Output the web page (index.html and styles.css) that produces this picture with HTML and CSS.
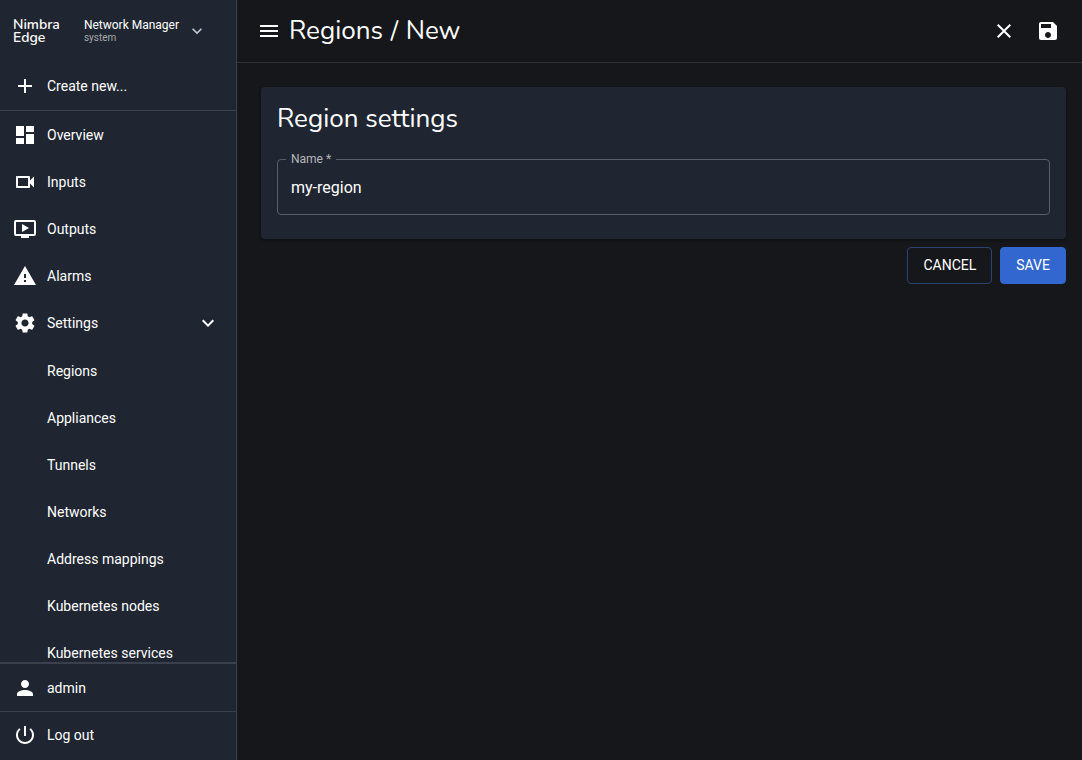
FILE: index.html
```html
<!DOCTYPE html>
<html lang="en">
  <head>
    <meta charset="UTF-8" />
    <meta name="viewport" content="width=device-width, initial-scale=1.0" />
    <title>Regions / New</title>
    <link rel="stylesheet" href="styles.css" />
  </head>
  <body>
    <aside class="sidebar">
      <div class="brand">
        <div class="logo">Nimbra<br />Edge</div>
        <button class="switcher" type="button">
          <span class="switcher-text">
            <span>Network Manager</span>
            <small>system</small>
          </span>
          <svg class="chevron" viewBox="0 0 24 24"><path d="M7.41 8.59 12 13.17l4.59-4.58L18 10l-6 6-6-6z" /></svg>
        </button>
      </div>
      <a class="item create" href="#">
        <svg class="icon" viewBox="0 0 24 24"><path d="M19 13h-6v6h-2v-6H5v-2h6V5h2v6h6z" /></svg>
        <span>Create new...</span>
      </a>
      <nav class="menu">
        <a class="item" href="#">
          <svg class="icon" viewBox="0 0 24 24"><path d="M3 13h8V3H3zm0 8h8v-6H3zm10 0h8V11h-8zm0-18v6h8V3z" /></svg>
          <span>Overview</span>
        </a>
        <a class="item" href="#">
          <svg class="icon" viewBox="0 0 24 24"><path d="M15 8v8H5V8zm1-2H4c-.55 0-1 .45-1 1v10c0 .55.45 1 1 1h12c.55 0 1-.45 1-1v-3.500l4 4v-11l-4 4V7c0-.55-.45-1-1-1z" /></svg>
          <span>Inputs</span>
        </a>
        <a class="item" href="#">
          <svg class="icon" viewBox="0 0 24 24"><path d="M21 3H3c-1.110 0-2 .89-2 2v12c0 1.100.89 2 2 2h5v2h8v-2h5c1.100 0 1.990-.9 1.990-2L23 5c0-1.110-.9-2-2-2zm0 14H3V5h18zM16 11l-7 4V7z" /></svg>
          <span>Outputs</span>
        </a>
        <a class="item" href="#">
          <svg class="icon" viewBox="0 0 24 24"><path d="M1 21h22L12 2zm12-3h-2v-2h2zm0-4h-2v-4h2z" /></svg>
          <span>Alarms</span>
        </a>
        <button class="item" type="button" aria-expanded="true">
          <svg class="icon" viewBox="0 0 24 24"><path d="M19.140 12.940c.04-.3.06-.61.06-.94 0-.32-.02-.64-.07-.94l2.030-1.580c.18-.14.23-.41.12-.61l-1.920-3.320c-.12-.22-.37-.29-.59-.22l-2.390.96c-.5-.38-1.030-.7-1.620-.94l-.36-2.540c-.04-.24-.24-.41-.48-.41h-3.840c-.24 0-.43.17-.47.41l-.36 2.540c-.59.24-1.130.57-1.620.94l-2.390-.96c-.22-.08-.47 0-.59.22L2.740 8.870c-.12.21-.08.47.12.61l2.030 1.580c-.05.3-.09.63-.09.94s.02.64.07.94l-2.030 1.580c-.18.14-.23.41-.12.61l1.920 3.320c.12.22.37.29.59.22l2.390-.96c.5.38 1.030.7 1.620.94l.36 2.540c.05.24.24.41.48.41h3.840c.24 0 .44-.17.47-.41l.36-2.540c.59-.24 1.130-.56 1.620-.94l2.390.96c.22.08.47 0 .59-.22l1.920-3.320c.12-.22.07-.47-.12-.61zM12 15.600c-1.980 0-3.600-1.620-3.600-3.600s1.620-3.600 3.600-3.600 3.600 1.620 3.600 3.600-1.620 3.600-3.600 3.600z" /></svg>
          <span>Settings</span>
          <svg class="icon expand" viewBox="0 0 24 24"><path d="M7.410 8.590 12 13.170l4.590-4.580L18 10l-6 6-6-6z" /></svg>
        </button>
        <div class="submenu">
          <a class="item" href="#">Regions</a>
          <a class="item" href="#">Appliances</a>
          <a class="item" href="#">Tunnels</a>
          <a class="item" href="#">Networks</a>
          <a class="item" href="#">Address mappings</a>
          <a class="item" href="#">Kubernetes nodes</a>
          <a class="item" href="#">Kubernetes services</a>
        </div>
      </nav>
      <div class="account">
        <a class="item" href="#">
          <svg class="icon" viewBox="0 0 24 24"><path d="M12 12c2.210 0 4-1.790 4-4s-1.790-4-4-4-4 1.790-4 4 1.790 4 4 4zm0 2c-2.670 0-8 1.340-8 4v2h16v-2c0-2.660-5.330-4-8-4z" /></svg>
          <span>admin</span>
        </a>
        <a class="item" href="#">
          <svg class="icon" viewBox="0 0 24 24"><path d="M13 3h-2v10h2zm4.830 2.170-1.420 1.420C17.990 7.860 19 9.810 19 12c0 3.870-3.130 7-7 7s-7-3.130-7-7c0-2.190 1.010-4.140 2.580-5.420L6.170 5.170C4.230 6.820 3 9.260 3 12c0 4.970 4.030 9 9 9s9-4.030 9-9c0-2.740-1.230-5.180-3.170-6.830z" /></svg>
          <span>Log out</span>
        </a>
      </div>
    </aside>

    <main class="main">
      <header class="topbar">
        <button class="icon-button" type="button" aria-label="Menu">
          <svg class="icon" viewBox="0 0 24 24"><path d="M3 18h18v-2H3zm0-5h18v-2H3zm0-7v2h18V6z" /></svg>
        </button>
        <h1>Regions <span class="separator">/</span> New</h1>
        <div class="actions">
          <button class="icon-button" type="button" aria-label="Close">
            <svg class="icon" viewBox="0 0 24 24"><path d="M19 6.410 17.590 5 12 10.590 6.410 5 5 6.410 10.590 12 5 17.590 6.410 19 12 13.410 17.590 19 19 17.590 13.410 12z" /></svg>
          </button>
          <button class="icon-button" type="submit" form="region-form" aria-label="Save">
            <svg class="icon" viewBox="0 0 24 24"><path d="M17 3H5c-1.110 0-2 .9-2 2v14c0 1.100.89 2 2 2h14c1.100 0 2-.9 2-2V7zm-5 16c-1.660 0-3-1.340-3-3s1.340-3 3-3 3 1.340 3 3-1.340 3-3 3zm3-10H5V5h10z" /></svg>
          </button>
        </div>
      </header>

      <form class="content" id="region-form">
        <section class="card">
          <h2>Region settings</h2>
          <div class="field">
            <label for="name">Name *</label>
            <input id="name" type="text" value="my-region" required />
          </div>
        </section>
        <div class="buttons">
          <button class="btn" type="button">CANCEL</button>
          <button class="btn btn-primary" type="submit">SAVE</button>
        </div>
      </form>
    </main>
  </body>
</html>
```
FILE: styles.css
```css
* {
  box-sizing: border-box;
}

body {
  margin: 0;
  height: 100vh;
  display: flex;
  background-color: #15171a;
  color: #fff;
  font-family: Roboto, "Liberation Sans", sans-serif;
  font-size: 14px;
  line-height: 20px;
}

button,
input {
  font: inherit;
  color: inherit;
}

button {
  background: none;
  border: 0;
  padding: 0;
  cursor: pointer;
}

svg {
  fill: currentColor;
  flex-shrink: 0;
}

h1,
h2 {
  margin: 0;
  font-family: Nunito, "Noto Sans", sans-serif;
  font-size: 26px;
  font-weight: 400;
  line-height: 32px;
}

.separator {
  margin: 0 1px;
}

.icon {
  width: 24px;
  height: 24px;
}

/* sidebar */
.sidebar {
  width: 237px;
  flex-shrink: 0;
  display: flex;
  flex-direction: column;
  background-color: #202631;
  border-right: 1px solid #3a404c;
}

.brand {
  display: flex;
  align-items: center;
  gap: 24px;
  height: 62px;
  padding-left: 13px;
}

.logo {
  font-family: Nunito, "Noto Sans", sans-serif;
  font-size: 14px;
  font-weight: 600;
  line-height: 13px;
}

.switcher {
  display: flex;
  align-items: center;
  gap: 8px;
  text-align: left;
  font-size: 12px;
  line-height: 14px;
}

.switcher-text {
  display: flex;
  flex-direction: column;
}

.switcher small {
  color: #a6a8ad;
  font-size: 10px;
  line-height: 12px;
}

.chevron {
  width: 20px;
  height: 20px;
  color: #c8c9cc;
}

.item {
  display: flex;
  align-items: center;
  gap: 10px;
  width: 100%;
  height: 47px;
  padding: 0 16px 0 13px;
  color: inherit;
  text-align: left;
  text-decoration: none;
}

.create {
  height: 49px;
  border-bottom: 1px solid #3a404c;
  flex-shrink: 0;
}

.menu {
  flex: 1;
  min-height: 0;
  overflow: hidden;
}

.expand {
  margin-left: auto;
}

.submenu {
  padding-top: 1px;
}

.submenu .item {
  padding-left: 47px;
}

.account {
  border-top: 2px solid #3a404c;
}

.account .item + .item {
  height: 49px;
  padding-bottom: 2px;
  border-top: 1px solid #3a404c;
}

/* main area */
.main {
  flex: 1;
  min-width: 0;
}

.topbar {
  display: flex;
  align-items: center;
  gap: 8px;
  height: 63px;
  padding: 0 22px 0 20px;
  border-bottom: 1px solid #303136;
}

.icon-button {
  display: flex;
}

.actions {
  display: flex;
  gap: 20px;
  margin-left: auto;
}

.content {
  padding: 24px 16px 24px 24px;
}

.card {
  padding: 16px 16px 24px;
  background-color: #202631;
  border-radius: 4px;
  box-shadow: 0 1px 3px rgba(0, 0, 0, 0.4);
}

.field {
  position: relative;
  margin-top: 24px;
}

.field label {
  position: absolute;
  top: -8px;
  left: 9px;
  padding: 0 5px;
  background-color: #202631;
  color: #b5b7bb;
  font-size: 12px;
  line-height: 16px;
}

.field input {
  display: block;
  width: 100%;
  height: 56px;
  padding: 0 13px;
  background: none;
  border: 1px solid #5a5e67;
  border-radius: 4px;
  font-size: 16px;
}

.buttons {
  display: flex;
  justify-content: flex-end;
  gap: 8px;
  margin-top: 8px;
}

.btn {
  height: 37px;
  padding: 0 15px 2px;
  border: 1px solid #2c4470;
  border-radius: 4px;
}

.btn-primary {
  background-color: #3367d0;
  border-color: #3367d0;
}
```
